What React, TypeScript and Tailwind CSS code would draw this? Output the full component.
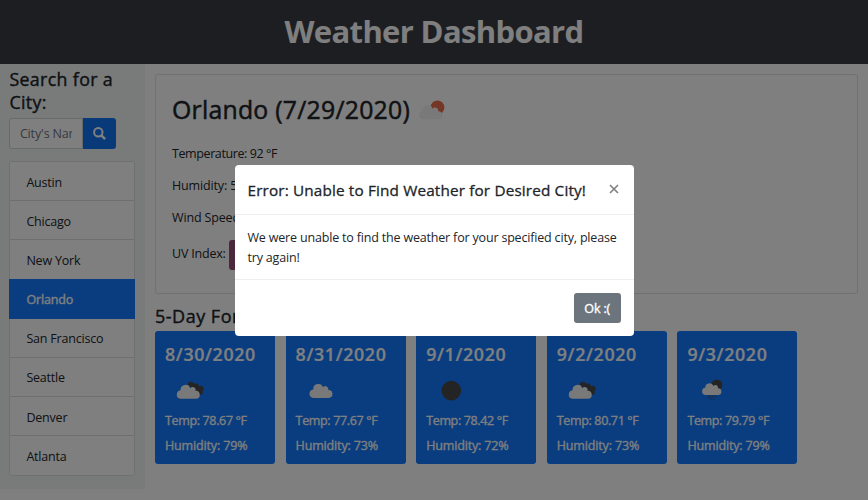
import React from "react";

type Icon = "broken" | "cloud" | "moon" | "rain";

const cities = ["Austin", "Chicago", "New York", "Orlando", "San Francisco", "Seattle", "Denver", "Atlanta"];

const forecast: { date: string; icon: Icon; temp: string; humidity: string }[] = [
  { date: "8/30/2020", icon: "broken", temp: "78.67", humidity: "79" },
  { date: "8/31/2020", icon: "cloud", temp: "77.67", humidity: "73" },
  { date: "9/1/2020", icon: "moon", temp: "78.42", humidity: "72" },
  { date: "9/2/2020", icon: "broken", temp: "80.71", humidity: "73" },
  { date: "9/3/2020", icon: "rain", temp: "79.79", humidity: "79" },
];

const CLOUD = "M4.6 17 A4.3 4.3 0 0 1 4.9 8.5 A5 5 0 0 1 14.6 6.4 A3 3 0 0 1 19.9 9 A4 4 0 0 1 20.2 17 Z";

function WeatherIcon({ icon }: { icon: Icon }) {
  return (
    <svg width="40" height="40" viewBox="0 0 40 40" className="block">
      {icon === "broken" && (
        <g>
          <path
            d="M12.8 13.6 A3.7 3.7 0 0 1 19.6 12.8 A3.3 3.3 0 0 1 24.5 15.6 A2.7 2.7 0 0 1 28 20 A3.2 3.2 0 0 1 25.6 24 Q20 22 17 17 Z"
            fill="#484848"
            transform="translate(-0.4 0.9)"
          />
          <path d={CLOUD} fill="#f2f2f2" transform="translate(0.7 11.8)" />
        </g>
      )}
      {icon === "cloud" && <path d={CLOUD} fill="#f2f2f2" transform="translate(2.4 10.9)" />}
      {icon === "moon" && <circle cx="15.3" cy="20.6" r="9.8" fill="#484848" />}
      {icon === "rain" && (
        <g>
          <circle cx="19.9" cy="14.9" r="5.4" fill="#484848" />
          <path d={CLOUD} fill="#f2f2f2" transform="translate(4.2 10.8) scale(0.84 0.83)" />
          <path
            d="M11.2 25.6l-1 1.8M13.6 25.6l-1.6 3.4M16.2 25.6l-.8 1.6M18.6 25.6l-.8 1.6M14.9 28.6l-.5 1.2M17.4 28.6l-.6 1.3"
            stroke="#484848"
            strokeWidth="1"
          />
        </g>
      )}
    </svg>
  );
}

function Sidebar() {
  return (
    <aside className="h-[425px] w-[145px] shrink-0 bg-[#f2f7f6] pl-[9.4px] pt-[4px]">
      <h3 className="text-[17.8px] leading-[23px] tracking-[0.36px] [-webkit-text-stroke:0.4px]">
        Search for a<br />City:
      </h3>
      <div className="mt-[4px] flex h-[31px]">
        <input
          placeholder="City's Name"
          className="w-[73.6px] rounded-l-[3px] border border-[#ced4da] bg-white px-[9.5px] pt-px text-[12.5px] tracking-[-0.15px] placeholder:text-[#6c757d]"
        />
        <button className="flex w-[33px] items-center justify-center rounded-r-[3px] bg-[#1075f5] text-white">
          <svg width="13" height="13" viewBox="0 0 13 13" fill="none" stroke="currentColor">
            <circle cx="5.3" cy="5.3" r="4.2" strokeWidth="2" />
            <path d="M8.4 8.4L12.1 12.1" strokeWidth="2.5" />
          </svg>
        </button>
      </div>
      <ul className="mt-[12px] flex h-[314.5px] w-[126px] flex-col rounded-[3px] border border-[#dfe2e2] bg-white">
        {cities.map((c) => (
          <li
            key={c}
            className={
              c === "Orlando"
                ? "-mx-px flex h-[40px] shrink-0 items-center bg-[#127aff] pl-[17px] pt-[2px] text-white [-webkit-text-stroke:0.35px]"
                : c === "Atlanta" || c === "New York"
                  ? "flex flex-1 items-center pl-[16px] pt-[3px] tracking-[-0.2px]"
                  : "flex flex-1 items-center border-b border-[#dfdfdf] pl-[16px] pt-[3px] tracking-[-0.2px]"
            }
          >
            {c}
          </li>
        ))}
      </ul>
    </aside>
  );
}

function CurrentWeather() {
  return (
    <section className="h-[219.5px] w-[703px] rounded-[3px] border border-[#e3e3e3] bg-white pl-[16px] pt-[18px]">
      <h2 className="flex h-[32px] items-center text-[24.8px] leading-[32px] tracking-[0.25px] [-webkit-text-stroke:0.5px]">
        Orlando (7/29/2020)
        <svg width="40" height="40" viewBox="0 0 40 40" className="ml-[1px] mt-[2px]">
          <circle cx="26.5" cy="17.3" r="6.9" fill="#eb6e4b" />
          <path d={CLOUD} fill="#f2f2f2" transform="translate(6.8 12.3) scale(1.02 1)" />
        </svg>
      </h2>
      <p className="mt-[19px] h-[20px] leading-[20px] tracking-[-0.4px]">Temperature: 92 °F</p>
      <p className="mt-[12px] h-[20px] leading-[20px]">Humidity: 5</p>
      <p className="mt-[12px] h-[20px] leading-[20px]">Wind Speed</p>
      <div className="mt-[11px] flex h-[31px] items-center">
        <span className="-mt-px tracking-[-0.2px]">UV Index:</span>
        <span className="ml-[3px] h-[30px] w-[52px] rounded-[3px] bg-[#96507a]" />
      </div>
    </section>
  );
}

function Modal() {
  return (
    <div className="absolute inset-0 bg-black/50">
      <div className="absolute left-[235px] top-[165px] h-[171px] w-[398.5px] rounded-[4px] bg-white">
        <div className="flex h-[50px] items-center justify-between border-b border-[#eceef0] pl-[12.5px] pr-[15px] pt-px">
          <h5 className="whitespace-nowrap text-[15.3px] tracking-[0.15px] [-webkit-text-stroke:0.3px]">
            Error: Unable to Find Weather for Desired City!
          </h5>
          <svg width="10" height="10" viewBox="0 0 10 10" stroke="#7f7f7f" strokeWidth="1.6" className="-mt-[3px]">
            <path d="M1 1l8 8M9 1L1 9" />
          </svg>
        </div>
        <p className="h-[65px] whitespace-nowrap border-b border-[#eceef0] pl-[12.5px] pt-[13px] leading-[20px] tracking-[-0.18px]">
          We were unable to find the weather for your specified city, please
          <br />
          try again!
        </p>
        <div className="flex justify-end pr-[12.5px] pt-[13px]">
          <button className="h-[30px] w-[47.5px] rounded-[3px] bg-[#6c757d] pt-px text-white [-webkit-text-stroke:0.35px]">Ok :(</button>
        </div>
      </div>
    </div>
  );
}

export default function App() {
  return (
    <div className="relative h-[500px] w-[868px] overflow-hidden bg-white font-['Open_Sans','Noto_Sans',sans-serif] text-[12.5px] leading-[20px] tracking-[-0.15px] text-[#212529]">
      <header className="flex h-[64px] items-center justify-center bg-[#3a3c44] pb-[3px]">
        <h1 className="text-[31px] font-bold tracking-[-0.65px] text-white">Weather Dashboard</h1>
      </header>
      <div className="flex">
        <Sidebar />
        <main className="pl-[10px] pt-[10px]">
          <CurrentWeather />
          <h3 className="mt-[11px] h-[26px] text-[18px] leading-[23px] tracking-[0.5px] [-webkit-text-stroke:0.4px]">5-Day For</h3>
          <div className="mt-[0.5px] flex gap-[10.6px]">
            {forecast.map((d) => (
              <article key={d.date} className="h-[133px] w-[120px] rounded-[3px] bg-[#127aff] pl-[10px] pt-[12px] text-white">
                <h4 className="h-[23px] text-[17.8px] font-semibold leading-[23px] tracking-[0.65px] [-webkit-text-stroke:0.2px]">{d.date}</h4>
                <div className="ml-[10px] mt-[4px] h-[40px]">
                  <WeatherIcon icon={d.icon} />
                </div>
                <p className="mt-px h-[20px] tracking-[-0.35px] [-webkit-text-stroke:0.3px]">Temp: {d.temp} °F</p>
                <p className="mt-[5px] tracking-[-0.15px] [-webkit-text-stroke:0.3px]">Humidity: {d.humidity}%</p>
              </article>
            ))}
          </div>
        </main>
      </div>
      <Modal />
    </div>
  );
}
